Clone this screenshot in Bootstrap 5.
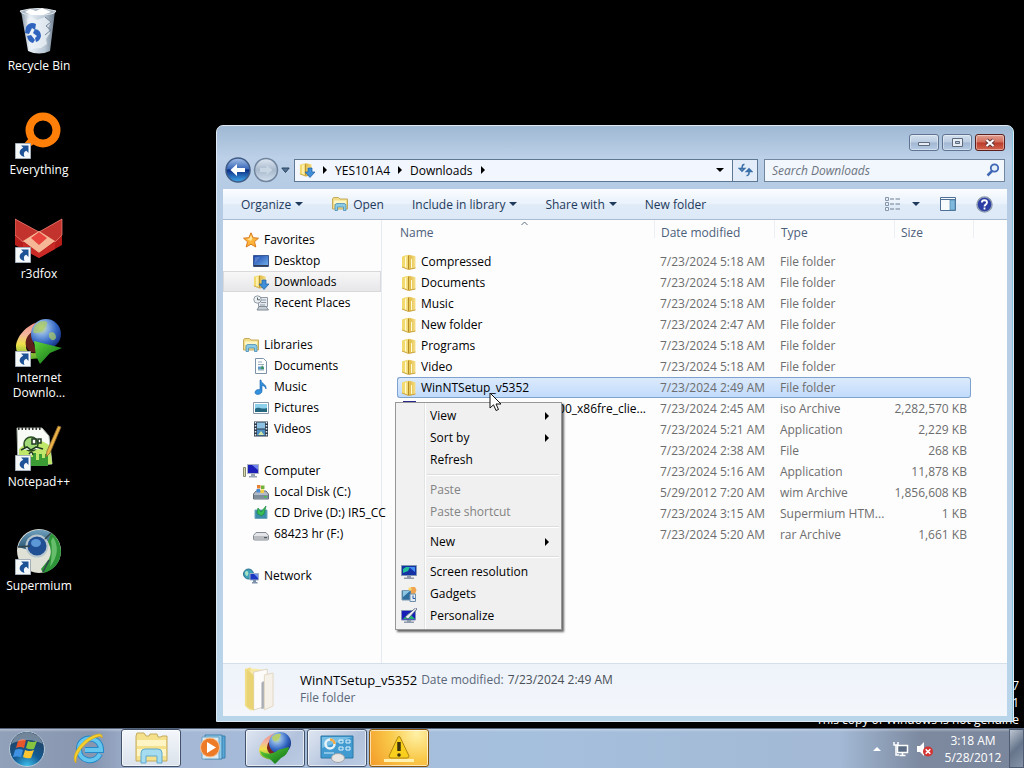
<!DOCTYPE html>
<html lang="en">
<head>
<meta charset="utf-8">
<meta name="viewport" content="width=device-width, initial-scale=1">
<title>Downloads</title>
<link rel="stylesheet" href="https://cdn.jsdelivr.net/npm/bootstrap@5.3.0/dist/css/bootstrap.min.css">
<style>
  body { background:#000; color:#000; font:12px/21px "Open Sans","Noto Sans",sans-serif; }
  button, input { font:inherit; }
  button { background:none; border:0; padding:0; color:inherit; }
  a { color:inherit; text-decoration:none; }
  svg { display:block; flex:none; }
  .i16 { width:16px; height:16px; }
  .tri { width:0; height:0; border:4px solid transparent; border-top-color:currentColor; border-bottom:0; }
  .tri-r { width:0; height:0; border:4px solid transparent; border-left-color:#000; border-right:0; }

  /* desktop */
  .shortcuts { width:78px; padding-top:7px; }
  .shortcut { height:104px; color:#fff; line-height:15px; text-align:center; }
  .shortcut svg { width:48px; height:48px; margin:0 auto 3px; }
  .genuine { right:5px; bottom:0; color:#fff; line-height:17px; text-align:right; }

  /* window */
  .explorer { left:216px; right:10px; top:125px; bottom:6px; padding:0 6px 5px;
    background:linear-gradient(#9fb8d3,#bcd0e8 32px,#b5cce4 60px,#bbcfe6 300px,#b9d5ea);
    border:1px solid #dfeaf5; border-radius:7px 7px 0 0; box-shadow:inset -1px 0 #86c5dc; }
  .caption { height:32px; padding:8px 2px 0; gap:3px; }
  .caption button { width:30px; height:17px; border:1px solid #5f7490; border-radius:3px; background:linear-gradient(#d2dfee,#bccde2 48%,#a2b7d1 52%,#b6cbe4); box-shadow:inset 0 0 0 1px #ffffff66; }
  .caption .closer { background:linear-gradient(#e2a091,#d26c5a 48%,#b93a29 52%,#d4664f); border-color:#5b1f1d; }
  .navrow { height:31px; padding:0 2px 7px; }
  .round { width:26px; height:26px; margin-right:2px; }
  .crumbs { height:23px; border:1px solid #5e7893; background:#f2f6fe; margin-right:6px; }
  .crumbs > * { height:21px; }
  .refresh { width:25px; border-left:1px solid #5e7893; background:#e3edf9; }
  .finder { width:241px; height:23px; border:1px solid #71869f; background:#f2f6fd; padding-right:4px; }
  .finder input { width:100px; background:none; border:0; outline:0; padding:0 0 0 7px; font-style:italic; }
  .finder input::placeholder { color:#6b7480; opacity:1; }
  .commands { height:31px; padding:0 14px 0 18px; color:#1e395b; background:linear-gradient(#fbfdff,#e9f1fb 50%,#dfebf7 52%,#dde9f7); border-bottom:1px solid #a9bcd2; }
  .client { background:#fdfdfe; }
  .places { width:159px; border-right:1px solid #e6ebf2; padding-top:9px; }
  .places a { display:flex; align-items:center; height:21px; white-space:nowrap; }
  .places .top { padding-left:20px; }
  .places .sub { padding-left:30px; }
  .places svg { margin-right:5px; }
  .places .group { margin-bottom:21px; }
  .places .here { background:linear-gradient(#f8f8f9,#e6e6e8); box-shadow:inset 0 0 0 1px #d9d9db; }
  .listing { padding:0 36px 0 15px; }
  .files { width:100%; table-layout:fixed; border-collapse:separate; border-spacing:0; color:#6d6d6d; white-space:nowrap; }
  .files th { position:relative; height:31px; line-height:26px; vertical-align:top; font-weight:400; color:#4c607a; padding:0 0 0 7px; }
  .files th:first-child { padding-left:3px; }
  .files th + th::before, .files th:last-child::after { content:""; position:absolute; left:0; top:0; height:18px; border-left:1px solid #eceff4; }
  .files th:last-child::after { left:auto; right:-3px; }
  .files td { height:21px; line-height:19px; padding:0 0 0 6px; border:1px solid transparent; border-width:1px 0; overflow:hidden; }
  .files td:first-child { padding:0 8px 0 3px; border-left-width:1px; color:#000; }
  .files td:last-child { padding:0 3px 0 0; border-right-width:1px; text-align:right; }
  .files .picked td { background:linear-gradient(#dceafc,#c1dbfc); border-color:#7da2ce; }
  .files .picked td:first-child { border-radius:3px 0 0 3px; }
  .files .picked td:last-child { border-radius:0 3px 3px 0; }
  .c-date, .c-type { width:120px; } .c-size { width:77px; }
  .sorted { left:50%; top:1px; margin-left:-4px; }
  .details { height:53px; padding:3px 20px 0; background:linear-gradient(#eef3fa,#f3f6fb); border-top:1px solid #d5dfeb; line-height:18px; color:#5a6779; }
  .details .title { font-size:13px; color:#000; }

  /* context menu */
  .popup { display:block; left:395px; top:402px; width:167px; min-width:0; padding:2px; border:1px solid #979797; border-radius:0; background:linear-gradient(90deg,#f1f1f1 28px,#e2e3e3 28px,#e2e3e3 29px,#fff 29px,#fff 30px,#f0f0f0 30px); box-shadow:2px 2px 2px #0009; font-size:12px; }
  .popup .dropdown-item { display:flex; align-items:center; height:22px; padding:0 10px 0 3px; color:#000; line-height:20px; }
  .popup .dropdown-item > span { flex:1; }
  .popup .dropdown-item:disabled { color:#838383; }
  .popup .slot { width:21px; margin-right:8px; }
  .popup hr { margin:3px 0 3px 29px; border-top:1px solid #dcdcdc; border-bottom:1px solid #fff; opacity:1; }
  .pointer { left:489px; top:392px; z-index:1100; }

  /* taskbar */
  .taskbar { height:40px; border-top:1px solid #55637a; background:linear-gradient(#ffffff55,#ffffff00 3px), linear-gradient(90deg,#92a1ba,#8795af 9%,#a5b8d6 14%,#a5c0dd 50%,#a3b9d5 82%,#7c899f 90%,#7a869c); }
  .start { width:59px; padding-left:8px; }
  .task { width:60px; height:38px; margin-right:2px; border:1px solid transparent; border-radius:3px; }
  .task.open { border-color:#42526b; background:linear-gradient(135deg,#dfe6f1,#b2c2dc 60%,#bccce4); box-shadow:inset 0 0 0 1px #ffffffa0; }
  .task.active { background:linear-gradient(#f4f7fa,#dae2ec); }
  .task.alerting { background:radial-gradient(circle at 80% 10%,#fff1a6,#f9ca4b 45%,#f39a27); border-color:#85530c; }
  .clock { width:72px; color:#fff; line-height:17px; text-align:center; }
  .peek { width:15px; border:1px solid #4e5b70; background:linear-gradient(135deg,#bcc5d1,#66758b 50%,#8794a8); }
</style>
</head>
<body class="min-vh-100 d-flex flex-column overflow-hidden">

<svg width="0" height="0" class="position-absolute" aria-hidden="true">
  <defs>
    <linearGradient id="gFold" x1="0" x2="1"><stop offset="0" stop-color="#fdf0a0"/><stop offset=".5" stop-color="#e3bf4c"/><stop offset="1" stop-color="#f6e08c"/></linearGradient>
    <linearGradient id="gBlue" x1="0" y1="0" x2="1" y2="1"><stop offset="0" stop-color="#1740a8"/><stop offset="1" stop-color="#77b7ef"/></linearGradient>
    <radialGradient id="gGlobe" cx=".35" cy=".3" r=".75"><stop offset="0" stop-color="#d5e98d"/><stop offset=".3" stop-color="#86aee2"/><stop offset=".65" stop-color="#3468c4"/><stop offset="1" stop-color="#152f80"/></radialGradient>
    <linearGradient id="gGreen" x1="0" y1="0" x2="1" y2="1"><stop offset="0" stop-color="#5ed33c"/><stop offset="1" stop-color="#086a14"/></linearGradient>
    <linearGradient id="gRain" x1="0" y1="0" x2="0" y2="1"><stop offset="0" stop-color="#ee8d80"/><stop offset=".35" stop-color="#f3b6a0"/><stop offset=".6" stop-color="#f2e14b"/><stop offset="1" stop-color="#5aac2c"/></linearGradient>
    <linearGradient id="gBin" x1="0" x2="1"><stop offset="0" stop-color="#8495a6"/><stop offset=".25" stop-color="#eaf1f7"/><stop offset=".7" stop-color="#b9c7d5"/><stop offset="1" stop-color="#6d7d8e"/></linearGradient>
    <radialGradient id="gOrb" cx=".5" cy="1" r=".9"><stop offset="0" stop-color="#3fc3ee"/><stop offset=".45" stop-color="#145b94"/><stop offset="1" stop-color="#23405f"/></radialGradient>
    <linearGradient id="gBack" x1="0" y1="0" x2="0" y2="1"><stop offset="0" stop-color="#a5c1e8"/><stop offset=".45" stop-color="#3a68b9"/><stop offset=".5" stop-color="#0c2c84"/><stop offset="1" stop-color="#3fa9ec"/></linearGradient>
    <linearGradient id="gFwd" x1="0" y1="0" x2="0" y2="1"><stop offset="0" stop-color="#dfe8f2"/><stop offset=".5" stop-color="#a8b9cd"/><stop offset="1" stop-color="#d2e0ee"/></linearGradient>
    <linearGradient id="gChrome" x1="0" y1="0" x2="0" y2="1"><stop offset="0" stop-color="#6fa0bd"/><stop offset="1" stop-color="#24506e"/></linearGradient>

    <symbol id="arrow" viewBox="0 0 16 16"><path d="M.5.5h15v15H.5z" fill="#f5f8fb" stroke="#a5afba"/><path d="M6 2.500h7.500V10l-2.200-2.200C8.500 9 8.500 11 9.500 14 3.500 12.500 3 7.500 8.300 4.800z" fill="#1d5296"/></symbol>
    <symbol id="folder" viewBox="0 0 16 16"><path d="M1 2.500 6.500.8v14L1 13z" fill="#f3da6e"/><path d="M4 2.500 8 .8l6.500 1.400V14L8 15.500 4 14z" fill="url(#gFold)"/><path d="M7.500 1.500V15" stroke="#b48d24"/><path d="M4.500 3v10M10.500 5v9" stroke="#fffbd8"/><path d="M1 13l6.500 2.500 7-1.500" fill="none" stroke="#cba440"/></symbol>
    <symbol id="dl" viewBox="0 0 16 16"><use href="#folder" width="14" height="15"/><path d="M9 6h4v4h3l-5 5.500L6 10h3z" fill="#3f8fd8" stroke="#1b5ba4" stroke-width=".7"/></symbol>
    <symbol id="star" viewBox="0 0 16 16"><path d="M8 .8l2.200 4.900 5.300.5-4 3.500 1.300 5.300L8 12.200 3.200 15l1.300-5.300-4-3.500 5.300-.5z" fill="#fcb43a" stroke="#d97a1d"/><path d="M8 3l1.400 3.600L8 9 4 7l2.600-.5z" fill="#ffe79a"/></symbol>
    <symbol id="desk" viewBox="0 0 16 16"><path d="M.5 2.500h15v11H.5z" fill="url(#gBlue)" stroke="#3b5a94"/><path d="M1 12h14v1.500H1z" fill="#343d50"/><path d="M2 4h5L2 10z" fill="#ffffff30"/></symbol>
    <symbol id="recent" viewBox="0 0 16 16"><path d="M5.500 2.500h9v9h-9z" fill="#e7ebef" stroke="#8e99a4"/><path d="M8 5h5M8 7.500h5M7 10h5" stroke="#8c99a6"/><circle cx="4.500" cy="4.500" r="3.700" fill="#eef1f4" stroke="#8e99a4"/><path d="M4.500 2.500v2.300H7" fill="none" stroke="#566"/><path d="M4 15l2-3.500h7L15.500 15z" fill="#c4ccd4" stroke="#818c97"/></symbol>
    <symbol id="lib" viewBox="0 0 16 16"><path d="M.5 3 1.500 1.500h5L8 3h7.500v10H.5z" fill="#f1dc87" stroke="#c7ab5c"/><path d="M2 4.500h12V8H2z" fill="#fff6c5"/><path d="M3 14.500v-5q0-2 2-2h7q2 0 2 2v5h-2.500V11h-6v3.500z" fill="#8ccbe6" stroke="#4b8db5" stroke-width=".8"/></symbol>
    <symbol id="doc" viewBox="0 0 16 16"><path d="M2.500.5h8l3 3v12h-11z" fill="#fdfefe" stroke="#7f93a8"/><path d="M5 4h4M5 6.500h6M5 12h6" stroke="#98a9bb"/><path d="M5 8.500h6v3H5z" fill="#5a9dc4"/><path d="M8 11l1-4 2 4z" fill="#3a9152"/></symbol>
    <symbol id="note" viewBox="0 0 16 16"><path d="M8 1c0 4 6 4 5 9-1-3-3-3.500-4-3.500V12c0 4-7 4.500-7 1.500C2 11 5 10 7 10.800V1z" fill="#3390dc" stroke="#1663ad" stroke-width=".6"/></symbol>
    <symbol id="pic" viewBox="0 0 16 16"><path d="M.5 2.500h15v11H.5z" fill="#fff" stroke="#8899a9"/><path d="M2 4h12v8H2z" fill="#8cd0ec"/><path d="M2 9c4-3 6 1 12-1v4H2z" fill="#24677f"/></symbol>
    <symbol id="vid" viewBox="0 0 16 16"><path d="M1 .5h14v15H1z" fill="#2c3a4b"/><path d="M4 1.500h8v6H4z" fill="#8cc1e3"/><path d="M4 8.500h8v6H4z" fill="#4d8fc2"/><path d="M2.500 1v15M13.500 1v15" stroke="#e4ebf0" stroke-width="1.500" stroke-dasharray="1.500 1.500"/><path d="M5 14l3-4 3 4z" fill="#d4e6a5"/></symbol>
    <symbol id="pc" viewBox="0 0 16 16"><path d="M.5 4.500h2v9h-2z" fill="#dadcb0" stroke="#85886a"/><path d="M4.500 1.500h11v9h-11z" fill="#1c20b8" stroke="#a9b2c2"/><path d="M9 2h6v5z" fill="#6f84ee"/><path d="M8 11h4v2h2v1.500H6V13h2z" fill="#9aa5b4"/></symbol>
    <symbol id="hdd" viewBox="0 0 16 16"><path d="M.5 10 3 7h10l2.500 3v5H.5z" fill="#b3bcc6" stroke="#616c78"/><path d="M1 11h14v3.500H1z" fill="#7f8c99"/><path d="M11 12h3v1.500h-3z" fill="#46c352"/><path d="M4 1h3.500v3.500H4z" fill="#e77f31"/><path d="M8 1.500h3.500V5H8z" fill="#72b23a"/><path d="M3.500 5H7v3.500H3.500z" fill="#4a8bd4"/><path d="M7.500 5.500H11V9H7.500z" fill="#f4cf43"/></symbol>
    <symbol id="cd" viewBox="0 0 16 16"><path d="M2 5h12v8.500H2z" fill="#3c8dab" stroke="#6fa6bb"/><path d="M5 3l3 4 5-6-2 8-3 2-4-3z" fill="#36bd56" stroke="#1c8640" stroke-width=".7"/></symbol>
    <symbol id="drive" viewBox="0 0 16 16"><path d="M.5 9.500 3 6.500h10l2.500 3V13q0 1-1 1h-13q-1 0-1-1z" fill="#e3e5e8" stroke="#868c93"/><path d="M1 10h14v3H1z" fill="#b9bdc2"/><path d="M11 11h3v1.200h-3z" fill="#535b63"/></symbol>
    <symbol id="net" viewBox="0 0 16 16"><circle cx="5.500" cy="6" r="5" fill="#3da1bb" stroke="#29708b"/><path d="M2 4c3-3 4 1 3 3s-3 1-3-3z" fill="#a6e2c1"/><path d="M7 5.500h8.500V12H7z" fill="#1c37c0" stroke="#9fb0c6"/><path d="M11 6h4v4z" fill="#7292ef"/><path d="M10 12h3v2h1.500v1.500H9V14h1z" fill="#7f92ab"/></symbol>
    <symbol id="screen" viewBox="0 0 16 16"><path d="M.5 1.500h15v10H.5z" fill="#1532a4" stroke="#8297b2"/><path d="M2 9V5l3-2h4l-2 4z" fill="#23c09b"/><path d="M8 3h6v5z" fill="#468ff2"/><path d="M6 12h4v1.500h3V15H3v-1.500h3z" fill="#8f9aac"/></symbol>
    <symbol id="gadget" viewBox="0 0 16 16"><path d="M1 4.500h9v9.500H1z" fill="#2e6d9f" stroke="#7897b0"/><path d="M2 5h7L2 11z" fill="#8dc5e2"/><path d="M10 1h4l1.500 3-1.500 4h-4z" fill="#f0a44f"/><path d="M9 8h5.500v7.500H9z" fill="#e5ebf0" stroke="#6e8fac"/><path d="M12 9.500v3h2" fill="none" stroke="#2358aa"/><circle cx="9" cy="3" r="1.700" fill="#f7d773"/></symbol>
    <symbol id="person" viewBox="0 0 16 16"><path d="M.5 2.500h14v9.500H.5z" fill="#181cb9" stroke="#8292b4"/><path d="M2 11 8 5l6 6z" fill="#22b76f"/><path d="M4 9 14.500 0 16 1 7 11z" fill="#e8edf4" stroke="#39456a" stroke-width=".7"/><path d="M6 12h4v1.500h3V15H3v-1.500h3z" fill="#8f9aac"/></symbol>
    <symbol id="idm" viewBox="0 0 48 48"><path d="M26 2C10 6 1 19 1 28c0 10 12 15 26 10l-2-5c-8 3-14 0-14-5 0-8 7-14 12-18z" fill="url(#gRain)"/><path d="M18 12C9 18 8 28 16 33c3 1 8 1 10-1-8-2-9-9-6-16z" fill="#601f1c"/><circle cx="31" cy="15" r="15" fill="url(#gGlobe)"/><path d="M19 8c4-6 10-7 13-5 1 4-3 5-4 9-4 1-7 4-10 1zM34 14c5-2 7 1 7 5-3 4-5 2-7-1z" fill="#a9ca67" opacity=".75"/><path d="M19 22 47 29 35 34 25 45 21 37z" fill="url(#gGreen)"/></symbol>
    <symbol id="idmbar" viewBox="0 0 34 34"><path d="M17 2C6 6 1 14 1 20q1 8 14 9l3-5q-8-1-8-6 1-6 9-9z" fill="url(#gRain)"/><path d="M12 9q-6 8 0 14l6-1q-6-5-3-14z" fill="#7c2620"/><circle cx="22" cy="12" r="11" fill="url(#gGlobe)"/><path d="M14 6q4-4 9-3-1 5-5 7-3 1-4-4z" fill="#b6cf6c"/><path d="M2 20q10 6 18-1l11-3q-1 8-8 11l-6 6-6-6q-7-1-9-7z" fill="url(#gGreen)"/></symbol>
  </defs>
</svg>

<main class="flex-grow-1 position-relative">
  <nav class="shortcuts" aria-label="Desktop">
    <a href="#" class="shortcut d-block"><svg viewBox="0 0 48 48"><path d="M6 4h34l-5 40q-11 5-22 0z" fill="url(#gBin)"/><path d="M5 4q18-5 36 0-1 4-18 4T5 4z" fill="#aab6c2" stroke="#dfe8ef"/><path d="M10 5l5-3 6 2 6-3 9 4-8 3H16z" fill="#fff"/><path d="M12 12l5-2 5 3 8-3 6 5-3 6 2 5-4 6 1 5-6 4-10 1-2-14z" fill="#edf3f8" opacity=".75"/><path d="M30 10l6 5-5 4 5 4-6 5" fill="none" stroke="#76879a"/><path d="M11 20q4-6 10-3l-1 6-3-2-3 6-4-1zM20 22q6 1 6 7-1 5-5 6l-1-4 2-2-4-3zM12 29l4-1 4 5-2 3q-5-1-6-7z" fill="#2f63bd"/></svg>Recycle Bin</a>
    <a href="#" class="shortcut d-block"><svg viewBox="0 0 48 48"><circle cx="28" cy="19" r="13.500" fill="none" stroke="#ff7f09" stroke-width="8"/><path d="M16 25l6 6-12 8-3-4z" fill="#ff7f09"/><use href="#arrow" y="32" width="16" height="16"/></svg>Everything</a>
    <a href="#" class="shortcut d-block"><svg viewBox="0 0 48 48"><path d="M0 4 24 17 47 4v26L24 43 0 30z" fill="#b51e1b"/><path d="M0 4 24 17 8 27 0 20zM47 4 24 17l16 10 7-7z" fill="#c3332d" stroke="#ef8b80" stroke-width=".7"/><path d="M24 16 40 26 24 38 8 26z" fill="#f6b796"/><path d="M24 17l8 6-8 7-8-7z" fill="#e8433d"/><path d="M8 27l16 11 16-11v7L24 43 8 34z" fill="#c92a25"/><use href="#arrow" y="32" width="16" height="16"/></svg>r3dfox</a>
    <a href="#" class="shortcut d-block"><svg viewBox="0 0 48 48"><use href="#idm" width="48" height="48"/><use href="#arrow" y="32" width="16" height="16"/></svg>Internet<br>Downlo...</a>
    <a href="#" class="shortcut d-block"><svg viewBox="0 0 48 48"><path d="M2 5h25l7 8 3 28-34 2z" fill="#f7faf5" stroke="#a9b3a8"/><path d="M4 26q16-16 31-3l2 18-33 1z" fill="#bfe86a"/><path d="M15 43V34h3v-4h3v7h3v-6h3v4h3v-4h3v12z" fill="#3b9c35"/><circle cx="16" cy="21" r="7" fill="#a1d877" stroke="#274a20" stroke-width="1.500"/><path d="M17 16h4v5h-4zM23 16h3v4h-3zM6 27l6-3 4 3 5-3 7 2M14 31q3-4 4 1" fill="#fff" stroke="#1f3920" stroke-width="1.500"/><path d="M3 5.500h24" stroke="#333" stroke-width="3" stroke-dasharray="1.500 2"/><path d="M43 3l3 1-11 26-4 4 1-6z" fill="#eab146" stroke="#8a662e" stroke-width=".8"/><use href="#arrow" y="32" width="16" height="16"/></svg>Notepad++</a>
    <a href="#" class="shortcut d-block"><svg viewBox="0 0 48 48"><circle cx="24" cy="24" r="22" fill="#dfe0d6"/><path d="M3 20A22 22 0 0 1 36 6l-2 9q-9-6-17 0l-3 8z" fill="url(#gChrome)"/><path d="M36 6a22 22 0 0 1-8 40l-2-4 8-10q4-8-1-17z" fill="#2d9438"/><path d="M38 10q9 14-3 30 3-16 1-26z" fill="#66bd6b"/><circle cx="22" cy="19" r="11.500" fill="#b9c7cd"/><circle cx="22" cy="19" r="9.500" fill="#204f94"/><ellipse cx="21" cy="16" rx="5" ry="4" fill="#5c97d6"/><path d="M3 20l12-1M36 6l-6 6M28 45l6-12" stroke="#33454c" stroke-width="1.500"/><use href="#arrow" y="32" width="16" height="16"/></svg>Supermium</a>
  </nav>

  <div class="genuine position-absolute">Windows 7<br>Build 7601<br>This copy of Windows is not genuine</div>

  <section class="explorer position-absolute d-flex flex-column" aria-label="Downloads">
    <div class="caption d-flex justify-content-end">
      <button type="button" aria-label="Minimize" class="d-flex justify-content-center align-items-center"><svg width="12" height="9"><path d="M.5 4.500h11v3H.5z" fill="#e6edf5" stroke="#5d6b7d"/></svg></button>
      <button type="button" aria-label="Maximize" class="d-flex justify-content-center align-items-center"><svg width="11" height="9"><path d="M.5.500h10v8H.5z" fill="#e6edf5" stroke="#5d6b7d"/><path d="M3.500 3.500h4v2h-4z" fill="#b9c9dc" stroke="#5d6b7d"/></svg></button>
      <button type="button" aria-label="Close" class="closer d-flex justify-content-center align-items-center"><svg width="12" height="10"><path d="M2.500 2l7 6M9.500 2l-7 6" stroke="#5c3437" stroke-width="4"/><path d="M2.500 2l7 6M9.500 2l-7 6" stroke="#fff" stroke-width="2.200"/></svg></button>
    </div>
    <div class="navrow d-flex align-items-center">
      <button type="button" class="round" aria-label="Back"><svg width="26" height="26"><circle cx="13" cy="13" r="12" fill="url(#gBack)" stroke="#3f5a85" stroke-width="1.500"/><path d="M5.500 13 12 7v4h8v4h-8v4z" fill="#fff"/></svg></button>
      <button type="button" class="round" aria-label="Forward"><svg width="26" height="26"><circle cx="13" cy="13" r="11.500" fill="url(#gFwd)" stroke="#71849d" stroke-width="1.500"/><path d="M19.500 13 13.500 8v3H7v4h6.500v3z" fill="#c8d5e3"/></svg></button>
      <button type="button" class="me-1" aria-label="Recent pages"><svg width="9" height="7"><path d="M.8 1h7.400L4.500 5.500z" fill="#527092" stroke="#2d4563"/></svg></button>
      <div class="crumbs flex-grow-1 d-flex align-items-center">
        <span class="ms-1 d-flex align-items-center"><svg class="i16"><use href="#dl"/></svg></span>
        <span class="d-flex align-items-center ps-2 pe-1"><i class="tri-r"></i></span>
        <a href="#" class="ms-1">YES101A4</a><span class="d-flex align-items-center mx-2"><i class="tri-r"></i></span><a href="#">Downloads</a><span class="d-flex align-items-center mx-2"><i class="tri-r"></i></span>
        <button type="button" class="ms-auto px-1 me-1 d-flex align-items-center" aria-label="Previous locations"><i class="tri"></i></button>
        <button type="button" class="refresh d-flex align-items-center justify-content-center" aria-label="Refresh"><svg width="15" height="14"><path d="M6.500 1.500Q4 1 4 6M1.500 5.500 4 8l2.500-2.500zM8.500 12.500q3 .5 2.500-5M8.500 8.500 11 6l2.500 2.500z" fill="none" stroke="#3a6fa8" stroke-width="1.600"/></svg></button>
      </div>
      <div class="finder d-flex align-items-center">
        <input type="search" class="flex-grow-1" placeholder="Search Downloads" aria-label="Search Downloads">
        <svg width="14" height="14"><circle cx="8.500" cy="5" r="3.700" fill="#e3effb" stroke="#4068b4" stroke-width="1.800"/><path d="M6 8 1.500 12.500" stroke="#4068b4" stroke-width="2.500"/></svg>
      </div>
    </div>
    <div class="commands d-flex align-items-center">
      <button type="button" class="d-flex align-items-center gap-1">Organize<i class="tri"></i></button>
      <button type="button" class="d-flex align-items-center gap-1 ms-4 ps-1"><svg width="18" height="16" viewBox="0 0 16 16"><use href="#lib"/></svg>Open</button>
      <button type="button" class="d-flex align-items-center gap-1 ms-4 ps-1">Include in library<i class="tri"></i></button>
      <button type="button" class="d-flex align-items-center gap-1 ms-4 ps-1">Share with<i class="tri"></i></button>
      <button type="button" class="ms-4 ps-1">New folder</button>
      <button type="button" class="ms-auto" aria-label="View layout"><svg class="i16" viewBox="0 0 16 16"><path d="M1.500 1.500h3v3h-3zM1.500 6.500h3v3h-3zM1.500 11.500h3v3h-3z" fill="#e8eff8" stroke="#8797ab"/><path d="M6 3h4M6 8h4M6 13h4M11.500 3H16M11.500 8H16M11.500 13H16" stroke="#6c7c90"/></svg></button>
      <button type="button" class="ms-2" aria-label="More views"><i class="tri d-block mx-1"></i></button>
      <button type="button" class="mx-3" aria-label="Preview pane"><svg class="i16" viewBox="0 0 16 16"><path d="M.5 1.500h15v13H.5z" fill="#f8fbfe" stroke="#4f6f94"/><path d="M.5 3.500h15" stroke="#4f6f94"/><path d="M10 4h5v10h-5z" fill="#7fb8dd" stroke="#4f86ae" stroke-width=".7"/></svg></button>
      <button type="button" class="ms-1" aria-label="Help"><svg width="17" height="17"><circle cx="8.500" cy="8.500" r="7.500" fill="#2d3fa5" stroke="#8c9ab0" stroke-width="1.500"/><path d="M5.800 6.500C6 3.500 11 3.500 11 6.500c0 2-2.500 2-2.500 4M8.500 11.500v2" fill="none" stroke="#fff" stroke-width="1.800"/></svg></button>
    </div>
    <div class="client flex-grow-1 d-flex">
      <nav class="places flex-shrink-0" aria-label="Places">
        <div class="group">
          <a href="#" class="top"><svg class="i16"><use href="#star"/></svg>Favorites</a>
          <a href="#" class="sub"><svg class="i16"><use href="#desk"/></svg>Desktop</a>
          <a href="#" class="sub here"><svg class="i16"><use href="#dl"/></svg>Downloads</a>
          <a href="#" class="sub"><svg class="i16"><use href="#recent"/></svg>Recent Places</a>
        </div>
        <div class="group">
          <a href="#" class="top"><svg class="i16"><use href="#lib"/></svg>Libraries</a>
          <a href="#" class="sub"><svg class="i16"><use href="#doc"/></svg>Documents</a>
          <a href="#" class="sub"><svg class="i16"><use href="#note"/></svg>Music</a>
          <a href="#" class="sub"><svg class="i16"><use href="#pic"/></svg>Pictures</a>
          <a href="#" class="sub"><svg class="i16"><use href="#vid"/></svg>Videos</a>
        </div>
        <div class="group">
          <a href="#" class="top"><svg class="i16"><use href="#pc"/></svg>Computer</a>
          <a href="#" class="sub"><svg class="i16"><use href="#hdd"/></svg>Local Disk (C:)</a>
          <a href="#" class="sub"><svg class="i16"><use href="#cd"/></svg>CD Drive (D:) IR5_CC</a>
          <a href="#" class="sub"><svg class="i16"><use href="#drive"/></svg>68423 hr (F:)</a>
        </div>
        <a href="#" class="top"><svg class="i16"><use href="#net"/></svg>Network</a>
      </nav>
      <div class="listing flex-grow-1">
        <table class="files">
          <colgroup><col><col class="c-date"><col class="c-type"><col class="c-size"></colgroup>
          <thead><tr><th scope="col">Name<svg class="sorted position-absolute" width="7" height="5"><path d="M.5 4 3.500 1l3 3" fill="none" stroke="#5f7084"/></svg></th><th scope="col">Date modified</th><th scope="col">Type</th><th scope="col">Size</th></tr></thead>
          <tbody>
            <tr><td><div class="d-flex align-items-center gap-1"><svg class="i16"><use href="#folder"/></svg>Compressed</div></td><td>7/23/2024 5:18 AM</td><td>File folder</td><td></td></tr>
            <tr><td><div class="d-flex align-items-center gap-1"><svg class="i16"><use href="#folder"/></svg>Documents</div></td><td>7/23/2024 5:18 AM</td><td>File folder</td><td></td></tr>
            <tr><td><div class="d-flex align-items-center gap-1"><svg class="i16"><use href="#folder"/></svg>Music</div></td><td>7/23/2024 5:18 AM</td><td>File folder</td><td></td></tr>
            <tr><td><div class="d-flex align-items-center gap-1"><svg class="i16"><use href="#folder"/></svg>New folder</div></td><td>7/23/2024 2:47 AM</td><td>File folder</td><td></td></tr>
            <tr><td><div class="d-flex align-items-center gap-1"><svg class="i16"><use href="#folder"/></svg>Programs</div></td><td>7/23/2024 5:18 AM</td><td>File folder</td><td></td></tr>
            <tr><td><div class="d-flex align-items-center gap-1"><svg class="i16"><use href="#folder"/></svg>Video</div></td><td>7/23/2024 5:18 AM</td><td>File folder</td><td></td></tr>
            <tr class="picked"><td><div class="d-flex align-items-center gap-1"><svg class="i16"><use href="#folder"/></svg>WinNTSetup_v5352</div></td><td>7/23/2024 2:49 AM</td><td>File folder</td><td></td></tr>
            <tr><td><div class="d-flex align-items-center justify-content-between"><svg class="i16" viewBox="0 0 16 16"><path d="M3 .5h11v15H3z" fill="#eef" stroke="#2b2a8c" stroke-width="2"/></svg>000_x86fre_clie...</div></td><td>7/23/2024 2:45 AM</td><td>iso Archive</td><td>2,282,570 KB</td></tr>
            <tr><td></td><td>7/23/2024 5:21 AM</td><td>Application</td><td>2,229 KB</td></tr>
            <tr><td></td><td>7/23/2024 2:38 AM</td><td>File</td><td>268 KB</td></tr>
            <tr><td></td><td>7/23/2024 5:16 AM</td><td>Application</td><td>11,878 KB</td></tr>
            <tr><td></td><td>5/29/2012 7:20 AM</td><td>wim Archive</td><td>1,856,608 KB</td></tr>
            <tr><td></td><td>7/23/2024 3:15 AM</td><td>Supermium HTM...</td><td>1 KB</td></tr>
            <tr><td></td><td>7/23/2024 5:20 AM</td><td>rar Archive</td><td>1,661 KB</td></tr>
          </tbody>
        </table>
      </div>
    </div>
    <div class="details d-flex">
      <svg width="33" height="45" viewBox="0 0 34 46"><path d="M2 2 8 0v45l-6-5z" fill="#f0dd85"/><path d="M8 1l14 2v34L8 45z" fill="#f8eaa5"/><path d="M11 5l14-3v38l-14 4z" fill="#fdfcfa" stroke="#ddd5c2"/><path d="M19 16q3-3 5 0v26l-5 1z" fill="#a9adb6"/><path d="M22 8l9-2v34l-9 4z" fill="#f5f0e8" stroke="#e2d9c2"/><path d="M4 3l7 5v37l-7-5z" fill="#e9d372"/></svg>
      <div class="ms-4 pt-1"><div class="d-flex"><span class="title">WinNTSetup_v5352</span><span class="ms-1">Date modified:</span><span class="ms-1 text-dark-emphasis">7/23/2024 2:49 AM</span></div><div>File folder</div></div>
    </div>
  </section>

  <div class="popup dropdown-menu position-absolute">
    <button type="button" class="dropdown-item"><i class="slot"></i><span>View</span><i class="tri-r"></i></button>
    <button type="button" class="dropdown-item"><i class="slot"></i><span>Sort by</span><i class="tri-r"></i></button>
    <button type="button" class="dropdown-item"><i class="slot"></i><span>Refresh</span></button>
    <hr>
    <button type="button" class="dropdown-item" disabled><i class="slot"></i><span>Paste</span></button>
    <button type="button" class="dropdown-item" disabled><i class="slot"></i><span>Paste shortcut</span></button>
    <hr>
    <button type="button" class="dropdown-item"><i class="slot"></i><span>New</span><i class="tri-r"></i></button>
    <hr>
    <button type="button" class="dropdown-item"><i class="slot"><svg class="i16"><use href="#screen"/></svg></i><span>Screen resolution</span></button>
    <button type="button" class="dropdown-item"><i class="slot"><svg class="i16"><use href="#gadget"/></svg></i><span>Gadgets</span></button>
    <button type="button" class="dropdown-item"><i class="slot"><svg class="i16"><use href="#person"/></svg></i><span>Personalize</span></button>
  </div>
  <svg class="pointer position-absolute" width="13" height="20"><path d="M1 1v15l3.500-3.200L7 18.500l2.500-1L7 12h5z" fill="#fff" stroke="#111"/></svg>
</main>

<footer class="taskbar d-flex">
  <button type="button" aria-label="Start" class="start"><svg width="38" height="38" viewBox="0 0 38 38"><circle cx="19" cy="19" r="17.500" fill="url(#gOrb)" stroke="#b8cad8"/><path d="M10 11q4-3 8-1l-2 8q-4-2-8 0z" fill="#e8562c"/><path d="M20 11q4 2 9 0l-3 8q-4 1-8-1z" fill="#86c440"/><path d="M7 20q4-2 8 0l-2 7q-4-1-8 0z" fill="#3f91e1"/><path d="M17 20q4 2 9 0l-3 8q-4 1-8-1z" fill="#fbc62f"/><path d="M3 14Q7 3 19 2q12 1 16 12Q19 6 3 14z" fill="#ffffff5c"/></svg></button>
  <button type="button" class="task d-flex align-items-center justify-content-center" aria-label="Internet Explorer"><svg width="34" height="34" viewBox="0 0 34 34"><path d="M28 23c-5 10-21 8-21-5 0-14 22-14 22 1H13" fill="none" stroke="#2588c8" stroke-width="6"/><path d="M28 23c-5 10-21 8-21-5 0-14 22-14 22 1H13" fill="none" stroke="#64c5ee" stroke-width="4"/><path d="M4 32C-3 26 11 5 27 3q4 0 3 4-1-3-5-1C15 9 3 22 4 32z" fill="#f6cf2b" stroke="#d5a713" stroke-width=".6"/></svg></button>
  <button type="button" class="task open active d-flex align-items-center justify-content-center" aria-label="Windows Explorer"><svg width="34" height="32" viewBox="0 0 34 32"><path d="M2 4 3 1h7l2 3h3l1-2h7l1 3h3l1-1h5v25H2z" fill="#f5e08c" stroke="#c3aa5e"/><path d="M3 8h29v6H3zM3 17h29v7H3z" fill="#fff5c4"/><path d="M7 31V21q0-4 4-4h13q4 0 4 4v10h-5v-7H12v7z" fill="#a6dcef" stroke="#5fa9cd"/></svg></button>
  <button type="button" class="task d-flex align-items-center justify-content-center" aria-label="Windows Media Player"><svg width="28" height="28" viewBox="0 0 28 28"><path d="M9 2h17v22H9z" fill="#57a8d6" stroke="#3d7fae"/><path d="M6 1h17v24H6z" fill="#8fcbe8" stroke="#3d7fae"/><path d="M3 3h17v22H3z" fill="#d9ecf5" stroke="#6aa0c2"/><circle cx="11" cy="13.500" r="9.500" fill="#ed7a26" stroke="#f9c392"/><path d="M8 8l9 5.500L8 19z" fill="#fff"/></svg></button>
  <button type="button" class="task open d-flex align-items-center justify-content-center" aria-label="Internet Download Manager"><svg width="34" height="34"><use href="#idmbar"/></svg></button>
  <button type="button" class="task open d-flex align-items-center justify-content-center" aria-label="Control Panel"><svg width="34" height="30" viewBox="0 0 34 30"><path d="M1 3h32v22H1z" fill="#419bd0" stroke="#2b78a8"/><path d="M2 4h30L2 15z" fill="#76bee4"/><circle cx="10" cy="11" r="4.500" fill="none" stroke="#e9f3f8" stroke-width="2.500"/><path d="M10 6.500a4.500 4.500 0 0 1 4.500 4.500" fill="none" stroke="#f3a844" stroke-width="2.500"/><path d="M19 7h4v3h-4zM26 7h4v3h-4zM19 14h4v3h-4zM26 14h4v3h-4z" fill="none" stroke="#dff1fb"/><path d="M4 20h10" stroke="#d4ecf9"/><ellipse cx="18" cy="25" rx="6.500" ry="4.500" fill="#e8e6e4" stroke="#9ba1a7"/></svg></button>
  <button type="button" class="task open alerting d-flex align-items-center justify-content-center" aria-label="Warning"><svg width="32" height="30" viewBox="0 0 32 30"><path d="M1 27.500h30" stroke="#fff1b0" stroke-width="3"/><path d="M15 4q1-1 2 0l9 19q0 2-2 2H8q-2 0-2-2z" fill="#f9cf1e" stroke="#b18611"/><path d="M16 9v9" stroke="#3b320f" stroke-width="3.500"/><circle cx="16" cy="22" r="1.800" fill="#3b320f"/></svg></button>
  <div class="ms-auto d-flex align-items-center">
    <button type="button" aria-label="Show hidden icons" class="me-2 pe-1"><svg width="8" height="4"><path d="M0 4 4 0 8 4z" fill="#fff"/></svg></button>
    <button type="button" aria-label="Network" class="me-2"><svg class="i16" viewBox="0 0 16 16"><path d="M4.500 4.500h10v7h-10z" fill="#5b6c84" stroke="#fff" stroke-width="1.500"/><path d="M1 1v3h4V1M3 4v10h3M9.500 12v2M6.500 14.500h6" fill="none" stroke="#fff" stroke-width="1.500"/></svg></button>
    <button type="button" aria-label="Volume muted" class="me-1"><svg class="i16" viewBox="0 0 16 16"><path d="M0 5h3l4-4v14l-4-4H0z" fill="#fff"/><circle cx="11" cy="10.500" r="5" fill="#d43331"/><path d="M8.700 8.200l4.600 4.600M13.300 8.200l-4.600 4.600" stroke="#fff" stroke-width="1.600"/></svg></button>
    <div class="clock">3:18 AM<br>5/28/2012</div>
    <button type="button" class="peek h-100" aria-label="Show desktop"></button>
  </div>
</footer>
<script src="https://cdn.jsdelivr.net/npm/bootstrap@5.3.0/dist/js/bootstrap.bundle.min.js"></script>
</body>
</html>
